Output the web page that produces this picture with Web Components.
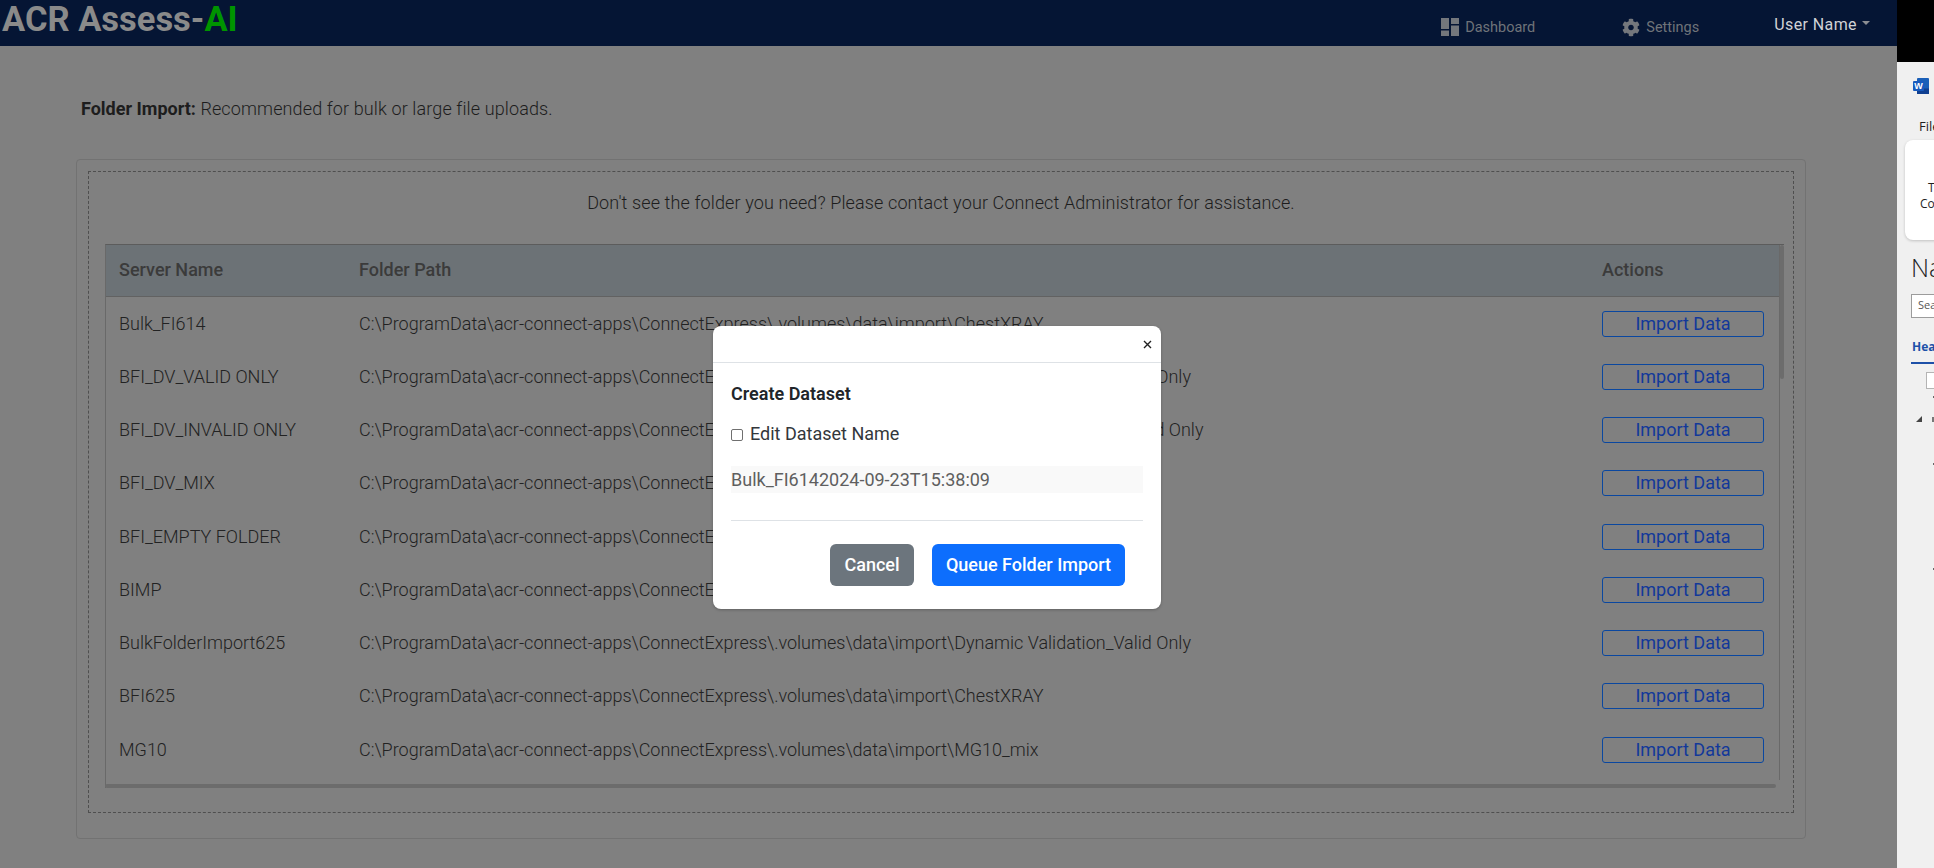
<!DOCTYPE html>
<html lang="en">
<head>
<meta charset="utf-8">
<title>Folder Import</title>
<style>
    html, body { margin: 0; height: 100%; }
    body {
        font-family: Roboto, "Liberation Sans", sans-serif;
        background: #808080;
        overflow: hidden;
    }
    .page {
        display: grid;
        grid-template-columns: 1897px 37px;
        height: 868px;
        position: relative;
    }
    .app { min-width: 0; }
</style>
</head>
<body>
<div class="page">
    <div class="app">
        <top-nav></top-nav>
        <folder-import>
            <folder-row name="Bulk_FI614" path="ChestXRAY"></folder-row>
            <folder-row name="BFI_DV_VALID ONLY" path="Dynamic Validation_Valid Only"></folder-row>
            <folder-row name="BFI_DV_INVALID ONLY" path="Dynamic Validation_Invalid Only"></folder-row>
            <folder-row name="BFI_DV_MIX" path="Dynamic Validation_Mix"></folder-row>
            <folder-row name="BFI_EMPTY FOLDER" path="Empty"></folder-row>
            <folder-row name="BIMP" path="BIMP"></folder-row>
            <folder-row name="BulkFolderImport625" path="Dynamic Validation_Valid Only"></folder-row>
            <folder-row name="BFI625" path="ChestXRAY"></folder-row>
            <folder-row name="MG10" path="MG10_mix"></folder-row>
        </folder-import>
    </div>
    <side-pane></side-pane>
    <dataset-modal value="Bulk_FI6142024-09-23T15:38:09"></dataset-modal>
</div>

<script>
const navTemplate = document.createElement('template');
navTemplate.innerHTML = `
    <style>
        :host {
            display: flex;
            align-items: center;
            height: 46px;
            background: #051534;
            color: #6f7379;
            font-size: 14.500px;
        }
        .brand {
            margin-left: 2px;
            margin-top: -8px;
            font-size: 34.500px;
            font-weight: 700;
            color: #8a8a8a;
            line-height: 46px;
            white-space: nowrap;
        }
        .brand b { color: #009400; font-weight: 700; }
        .link {
            display: flex;
            align-items: center;
            gap: 6px;
            margin-top: 8px;
        }
        .link svg { display: block; fill: #74777c; }
        .dash { margin-left: auto; }
        .gear { margin-left: 87px; }
        .user {
            margin-left: 75px;
            margin-right: 27px;
            margin-top: 2px;
            display: flex;
            gap: 5px;
            color: #d0d2d6;
            font-size: 16px;
            letter-spacing: .4px;
        }
        .caret {
            width: 0;
            height: 0;
            margin-top: 6px;
            border: 4px solid transparent;
            border-top-color: #8b8d92;
            border-bottom: 0;
        }
    </style>
    <div class="brand">ACR Assess-<b>AI</b></div>
    <div class="link dash">
        <svg width="18" height="18" viewBox="0 0 18 18">
            <path d="M0 0h8v11H0zM10 0h8v6h-8zM10 7.500h8V18h-8zM0 12.500h8V18H0z"/>
        </svg>
        <span>Dashboard</span>
    </div>
    <div class="link gear">
        <svg width="18" height="19" viewBox="0 0 512 512">
            <path d="M487.4 315.7l-42.6-24.6c4.300-23.200 4.300-47 0-70.200l42.600-24.600c4.900-2.800 7.100-8.600 5.500-14-11.100-35.600-30-67.800-54.700-94.600-3.800-4.100-10-5.100-14.800-2.300L380.800 110c-17.900-15.400-38.500-27.300-60.800-35.100V25.800c0-5.600-3.900-10.500-9.400-11.700-36.700-8.200-74.300-7.800-109.200 0-5.500 1.200-9.400 6.100-9.400 11.700V75c-22.200 7.900-42.800 19.800-60.800 35.100L88.700 85.500c-4.900-2.800-11-1.900-14.800 2.300-24.700 26.700-43.600 58.900-54.700 94.600-1.700 5.400.6 11.200 5.500 14L67.300 221c-4.300 23.200-4.300 47 0 70.200l-42.600 24.600c-4.900 2.800-7.100 8.600-5.500 14 11.100 35.600 30 67.800 54.700 94.600 3.800 4.100 10 5.100 14.800 2.300l42.600-24.600c17.900 15.400 38.500 27.300 60.800 35.100v49.200c0 5.600 3.900 10.500 9.400 11.700 36.700 8.200 74.300 7.800 109.200 0 5.500-1.200 9.400-6.100 9.400-11.700v-49.200c22.200-7.900 42.800-19.800 60.800-35.100l42.600 24.600c4.900 2.800 11 1.900 14.800-2.300 24.700-26.700 43.600-58.900 54.700-94.600 1.500-5.500-.7-11.300-5.600-14.100zM256 336c-44.100 0-80-35.900-80-80s35.900-80 80-80 80 35.900 80 80-35.900 80-80 80z"/>
        </svg>
        <span>Settings</span>
    </div>
    <div class="user"><span>User Name</span><i class="caret"></i></div>
`;

class TopNav extends HTMLElement {
    constructor () {
        super();
        this.attachShadow({ mode: 'open' }).appendChild(navTemplate.content.cloneNode(true));
    }
}

const importTemplate = document.createElement('template');
importTemplate.innerHTML = `
    <style>
        :host {
            display: block;
            padding: 52px 91px 0 76px;
            color: #1d1d1d;
        }
        .intro {
            margin: 0 0 40px 5px;
            height: 21px;
            line-height: 21px;
            font-size: 18px;
            font-weight: 300;
            letter-spacing: .12px;
        }
        .intro b { font-weight: 700; letter-spacing: 0; }
        .card {
            height: 680px;
            box-sizing: border-box;
            padding: 11px;
            border: 1px solid #727272;
            border-radius: 4px;
        }
        .dashed {
            height: 642px;
            box-sizing: border-box;
            padding: 0 9px 0 16px;
            border: 1px dashed #4f4f4f;
        }
        .help {
            height: 72px;
            display: flex;
            align-items: center;
            justify-content: center;
            padding: 0 7px 12px 0;
            box-sizing: border-box;
            font-size: 18px;
            font-weight: 300;
            letter-spacing: .12px;
        }
        .table {
            position: relative;
            height: 544px;
            box-sizing: border-box;
            border-top: 1px solid #5c5c5c;
            border-left: 1px solid #696969;
        }
        .head {
            display: grid;
            grid-template-columns: 253px 1fr 178px;
            height: 52px;
            padding-bottom: 2px;
            box-sizing: border-box;
            align-items: center;
            background: #6c7276;
            border-bottom: 1px solid #626262;
            margin-right: 4px;
            color: #3b3b3b;
            font-size: 18px;
            font-weight: 500;
        }
        .head span:first-child { padding-left: 13px; }
        .edge {
            position: absolute;
            top: 0;
            right: 4px;
            bottom: 8px;
            width: 1px;
            background: #696969;
        }
        .vbar {
            position: absolute;
            top: 0;
            right: 0;
            width: 4px;
            height: 134px;
            background: #6c6c6c;
            border-radius: 2px;
        }
        .hbar {
            position: absolute;
            left: -1px;
            bottom: 0;
            right: 8px;
            height: 4px;
            background: #6c6c6c;
            border-radius: 2px;
        }
    </style>
    <p class="intro"><b>Folder Import:</b> Recommended for bulk or large file uploads.</p>
    <div class="card">
        <div class="dashed">
            <div class="help">Don't see the folder you need? Please contact your Connect Administrator for assistance.</div>
            <div class="table">
                <div class="head"><span>Server Name</span><span>Folder Path</span><span>Actions</span></div>
                <slot></slot>
                <i class="edge"></i>
                <i class="vbar"></i>
                <i class="hbar"></i>
            </div>
        </div>
    </div>
`;

class FolderImport extends HTMLElement {
    constructor () {
        super();
        this.attachShadow({ mode: 'open' }).appendChild(importTemplate.content.cloneNode(true));
    }
}

const rowTemplate = document.createElement('template');
rowTemplate.innerHTML = `
    <style>
        :host {
            display: grid;
            grid-template-columns: 253px 1fr 178px;
            align-items: center;
            height: 53.25px;
            margin-right: 4px;
            color: #222;
            font-size: 18px;
            font-weight: 300;
            white-space: nowrap;
        }
        .name { padding-left: 13px; margin-top: -1px; }
        .path { margin-top: -1px; }
        button {
            display: block;
            width: 162px;
            height: 26px;
            padding: 0;
            background: transparent;
            border: 1px solid #0a47a0;
            border-radius: 3px;
            color: #12389a;
            font: 400 18px Roboto, sans-serif;
            line-height: 24px;
        }
    </style>
    <span class="name"></span>
    <span class="path"></span>
    <span><button type="button">Import Data</button></span>
`;

class FolderRow extends HTMLElement {
    constructor () {
        super();
        this.attachShadow({ mode: 'open' }).appendChild(rowTemplate.content.cloneNode(true));
    }

    connectedCallback () {
        const base = 'C:\\ProgramData\\acr-connect-apps\\ConnectExpress\\.volumes\\data\\import\\';
        this.shadowRoot.querySelector('.name').textContent = this.getAttribute('name');
        this.shadowRoot.querySelector('.path').textContent = base + this.getAttribute('path');
    }
}

const modalTemplate = document.createElement('template');
modalTemplate.innerHTML = `
    <style>
        :host {
            position: absolute;
            left: 713px;
            top: 326px;
            width: 448px;
            height: 283px;
            box-sizing: border-box;
            background: #fff;
            border-radius: 8px;
            color: #212529;
            font-size: 18px;
            box-shadow: 0 1px 3px rgba(0, 0, 0, .25);
        }
        header {
            display: flex;
            justify-content: flex-end;
            align-items: center;
            height: 36px;
            padding-right: 9px;
            border-bottom: 1px solid #dee2e6;
        }
        header svg { display: block; }
        .body { padding: 0 18px; }
        h2 {
            margin: 21px 0 0;
            font-size: 18px;
            line-height: 20px;
            font-weight: 600;
        }
        label {
            display: flex;
            align-items: center;
            gap: 7px;
            margin-top: 20px;
            line-height: 20px;
            font-weight: 400;
            color: #33373b;
        }
        input[type=checkbox] {
            width: 12px;
            height: 12px;
            margin: 1px 0 0;
            appearance: none;
            background: #fff;
            border: 1px solid #6f6f6f;
            border-radius: 2px;
        }
        .name {
            margin-top: 22px;
            height: 27px;
            line-height: 27px;
            background: #f9f9f9;
            color: #5f5f5f;
        }
        hr {
            margin: 27px 0 0;
            border: 0;
            border-top: 1px solid #dee2e6;
        }
        .actions {
            display: flex;
            justify-content: flex-end;
            gap: 18px;
            margin-top: 23px;
            padding-right: 18px;
        }
        button {
            height: 42px;
            padding: 0 0 2px;
            border: 0;
            border-radius: 6px;
            color: #fff;
            font: 500 18px Roboto, sans-serif;
        }
        .cancel { width: 84px; background: #6c757d; }
        .queue { width: 193px; background: #0d6efd; }
    </style>
    <header>
        <svg width="9" height="9" viewBox="0 0 9 9"><path d="M1 1l7 7M8 1L1 8" stroke="#222" stroke-width="1.400"/></svg>
    </header>
    <div class="body">
        <h2>Create Dataset</h2>
        <label><input type="checkbox"><span>Edit Dataset Name</span></label>
        <div class="name"></div>
        <hr>
        <div class="actions">
            <button class="cancel" type="button">Cancel</button>
            <button class="queue" type="button">Queue Folder Import</button>
        </div>
    </div>
`;

class DatasetModal extends HTMLElement {
    constructor () {
        super();
        this.attachShadow({ mode: 'open' }).appendChild(modalTemplate.content.cloneNode(true));
    }

    connectedCallback () {
        this.shadowRoot.querySelector('.name').textContent = this.getAttribute('value');
    }
}

const sideTemplate = document.createElement('template');
sideTemplate.innerHTML = `
    <style>
        :host {
            display: block;
            height: 868px;
            overflow: hidden;
            background: #f0f0f0;
            color: #1f1f1f;
            font-family: "Open Sans", "Noto Sans", sans-serif;
            white-space: nowrap;
        }
        .black { height: 62px; background: #000; }
        .word { display: block; margin: 16px 0 0 16px; }
        .file { margin: 22px 0 0 22px; height: 20px; line-height: 20px; font-size: 13px; }
        .ribbon {
            box-sizing: border-box;
            width: 60px;
            height: 100px;
            margin: 4px 0 0 8px;
            padding: 40px 0 0 15px;
            background: #fff;
            border-radius: 8px;
            box-shadow: 0 1px 3px rgba(0, 0, 0, .2);
            font-size: 12px;
            line-height: 16px;
        }
        .ribbon span { display: block; }
        .ribbon .t { padding-left: 8px; }
        .nav { margin: 10px 0 0 14px; height: 34px; line-height: 34px; font-size: 25px; font-weight: 300; color: #222; }
        .search {
            box-sizing: border-box;
            width: 60px;
            height: 24px;
            margin: 10px 0 0 14px;
            padding-left: 6px;
            background: #fff;
            border: 1px solid #9c9c9c;
            font-size: 11px;
            line-height: 20px;
            color: #555;
        }
        .tab {
            width: 60px;
            height: 32px;
            margin: 14px 0 0 14px;
            padding-left: 1px;
            box-sizing: border-box;
            border-bottom: 2px solid #1d50a8;
            font-size: 12px;
            font-weight: 700;
            line-height: 30px;
            color: #1d50a8;
        }
        .check {
            box-sizing: border-box;
            width: 30px;
            height: 17px;
            margin: 8px 0 0 29px;
            background: #fff;
            border: 1px solid #b4b4b4;
        }
        .tick { width: 4px; height: 2px; margin-left: 36px; background: #666; }
        .t1 { margin-top: 7px; }
        .arrow-row { display: flex; align-items: flex-end; gap: 10px; margin: 18px 0 0 19px; }
        .arrow {
            width: 0;
            height: 0;
            border-style: solid;
            border-width: 0 0 6px 6px;
            border-color: transparent transparent #444 transparent;
        }
        .arrow-row b { width: 4px; height: 5px; background: #777; }
        .t2 { margin-top: 41px; }
        .t3 { margin-top: 103px; }
    </style>
    <div class="black"></div>
    <svg class="word" width="16" height="16" viewBox="0 0 16 16">
        <rect x="4" width="12" height="16" rx="1" fill="#1a5fb8"/>
        <rect x="4" y="10.500" width="12" height="5.500" fill="#103f91"/>
        <rect y="3" width="11" height="10" rx="1" fill="#185abd"/>
        <text x="5.500" y="11" text-anchor="middle" font-family="'Liberation Sans', sans-serif" font-size="9" font-weight="700" fill="#fff">W</text>
    </svg>
    <div class="file">File</div>
    <div class="ribbon"><span class="t">T</span><span>Co</span></div>
    <div class="nav">Na</div>
    <div class="search">Sea</div>
    <div class="tab">Hea</div>
    <div class="check"></div>
    <div class="tick t1"></div>
    <div class="arrow-row"><i class="arrow"></i><b></b></div>
    <div class="tick t2"></div>
    <div class="tick t3"></div>
`;

class SidePane extends HTMLElement {
    constructor () {
        super();
        this.attachShadow({ mode: 'open' }).appendChild(sideTemplate.content.cloneNode(true));
    }
}

customElements.define('top-nav', TopNav);
customElements.define('folder-import', FolderImport);
customElements.define('folder-row', FolderRow);
customElements.define('dataset-modal', DatasetModal);
customElements.define('side-pane', SidePane);
</script>
</body>
</html>
